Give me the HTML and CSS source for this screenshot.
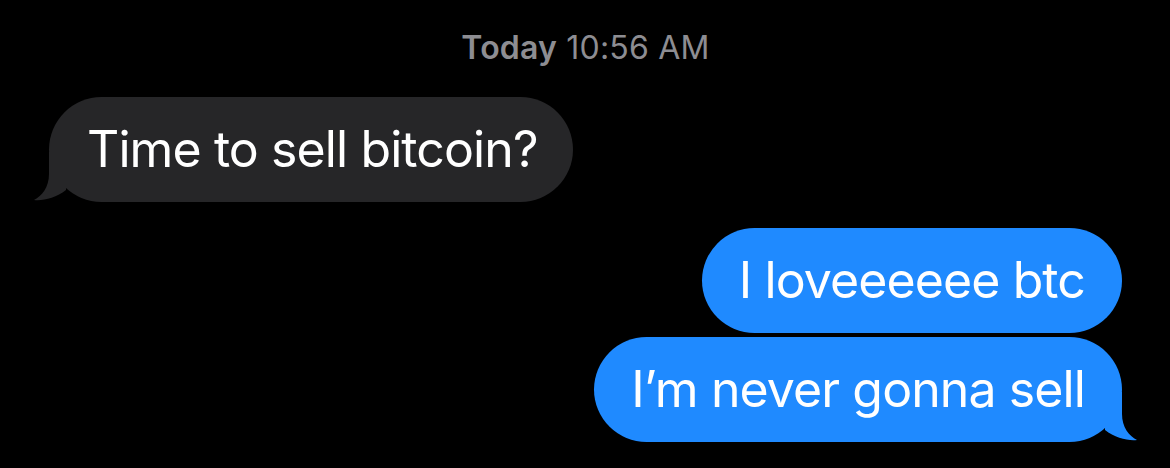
FILE: index.html
```html
<!DOCTYPE html>
<html lang="en">
<head>
    <meta charset="UTF-8">
    <title>Messages</title>
    <link rel="stylesheet" href="styles.css">
</head>
<body>
    <div class="thread">
        <div class="stamp"><strong>Today</strong> 10:56 AM</div>

        <div class="row incoming">
            <div class="bubble gray">
                Time to sell bitcoin?
                <svg class="tail-shape" viewBox="0 0 50 50" width="50" height="50">
                    <path d="M20 0 L20 22 C20 35 13 44 5 48 C14 49 27 46 37 38 L37 0 Z" fill="#262628"/>
                </svg>
            </div>
        </div>

        <div class="row outgoing first">
            <div class="bubble blue">I loveeeeee btc</div>
        </div>
        <div class="row outgoing">
            <div class="bubble blue">
                I’m never gonna sell
                <svg class="tail-shape" viewBox="0 0 50 50" width="50" height="50">
                    <path d="M20 0 L20 22 C20 35 13 44 5 48 C14 49 27 46 37 38 L37 0 Z" fill="#1f8aff"/>
                </svg>
            </div>
        </div>
    </div>
</body>
</html>
```

FILE: styles.css
```css
:root {
    --bg: #000000;
    --gray: #262628;
    --blue: #1f8aff;
    --muted: #8d8d92;
}

body {
    background: var(--bg);
    margin: 0;
    font-family: 'Inter', 'Roboto', sans-serif;
    color: white;
}

.thread {
    padding: 30px 48px 0 49px;
}

.stamp {
    text-align: center;
    color: var(--muted);
    font-size: 32px;
    line-height: 36px;
    letter-spacing: 0.2px;
    margin-bottom: 31px;
}

.stamp strong {
    font-weight: 600;
}

.row {
    display: flex;
    margin-bottom: 4px;
}

.row.outgoing {
    justify-content: flex-end;
}

.row.first {
    margin-top: 26px;
}

.bubble {
    position: relative;
    font-size: 50px;
    line-height: 61px;
    letter-spacing: -0.9px;
    padding: 22px 35px 22px 38px;
    border-radius: 53px;
}

.gray {
    background: var(--gray);
}

.blue {
    background: var(--blue);
    padding: 22px 37px 22px 37px;
}

.tail-shape {
    position: absolute;
    bottom: 0;
    left: -20px;
    display: block;
}

.blue .tail-shape {
    left: auto;
    right: -20px;
    transform: scaleX(-1);
}
```
